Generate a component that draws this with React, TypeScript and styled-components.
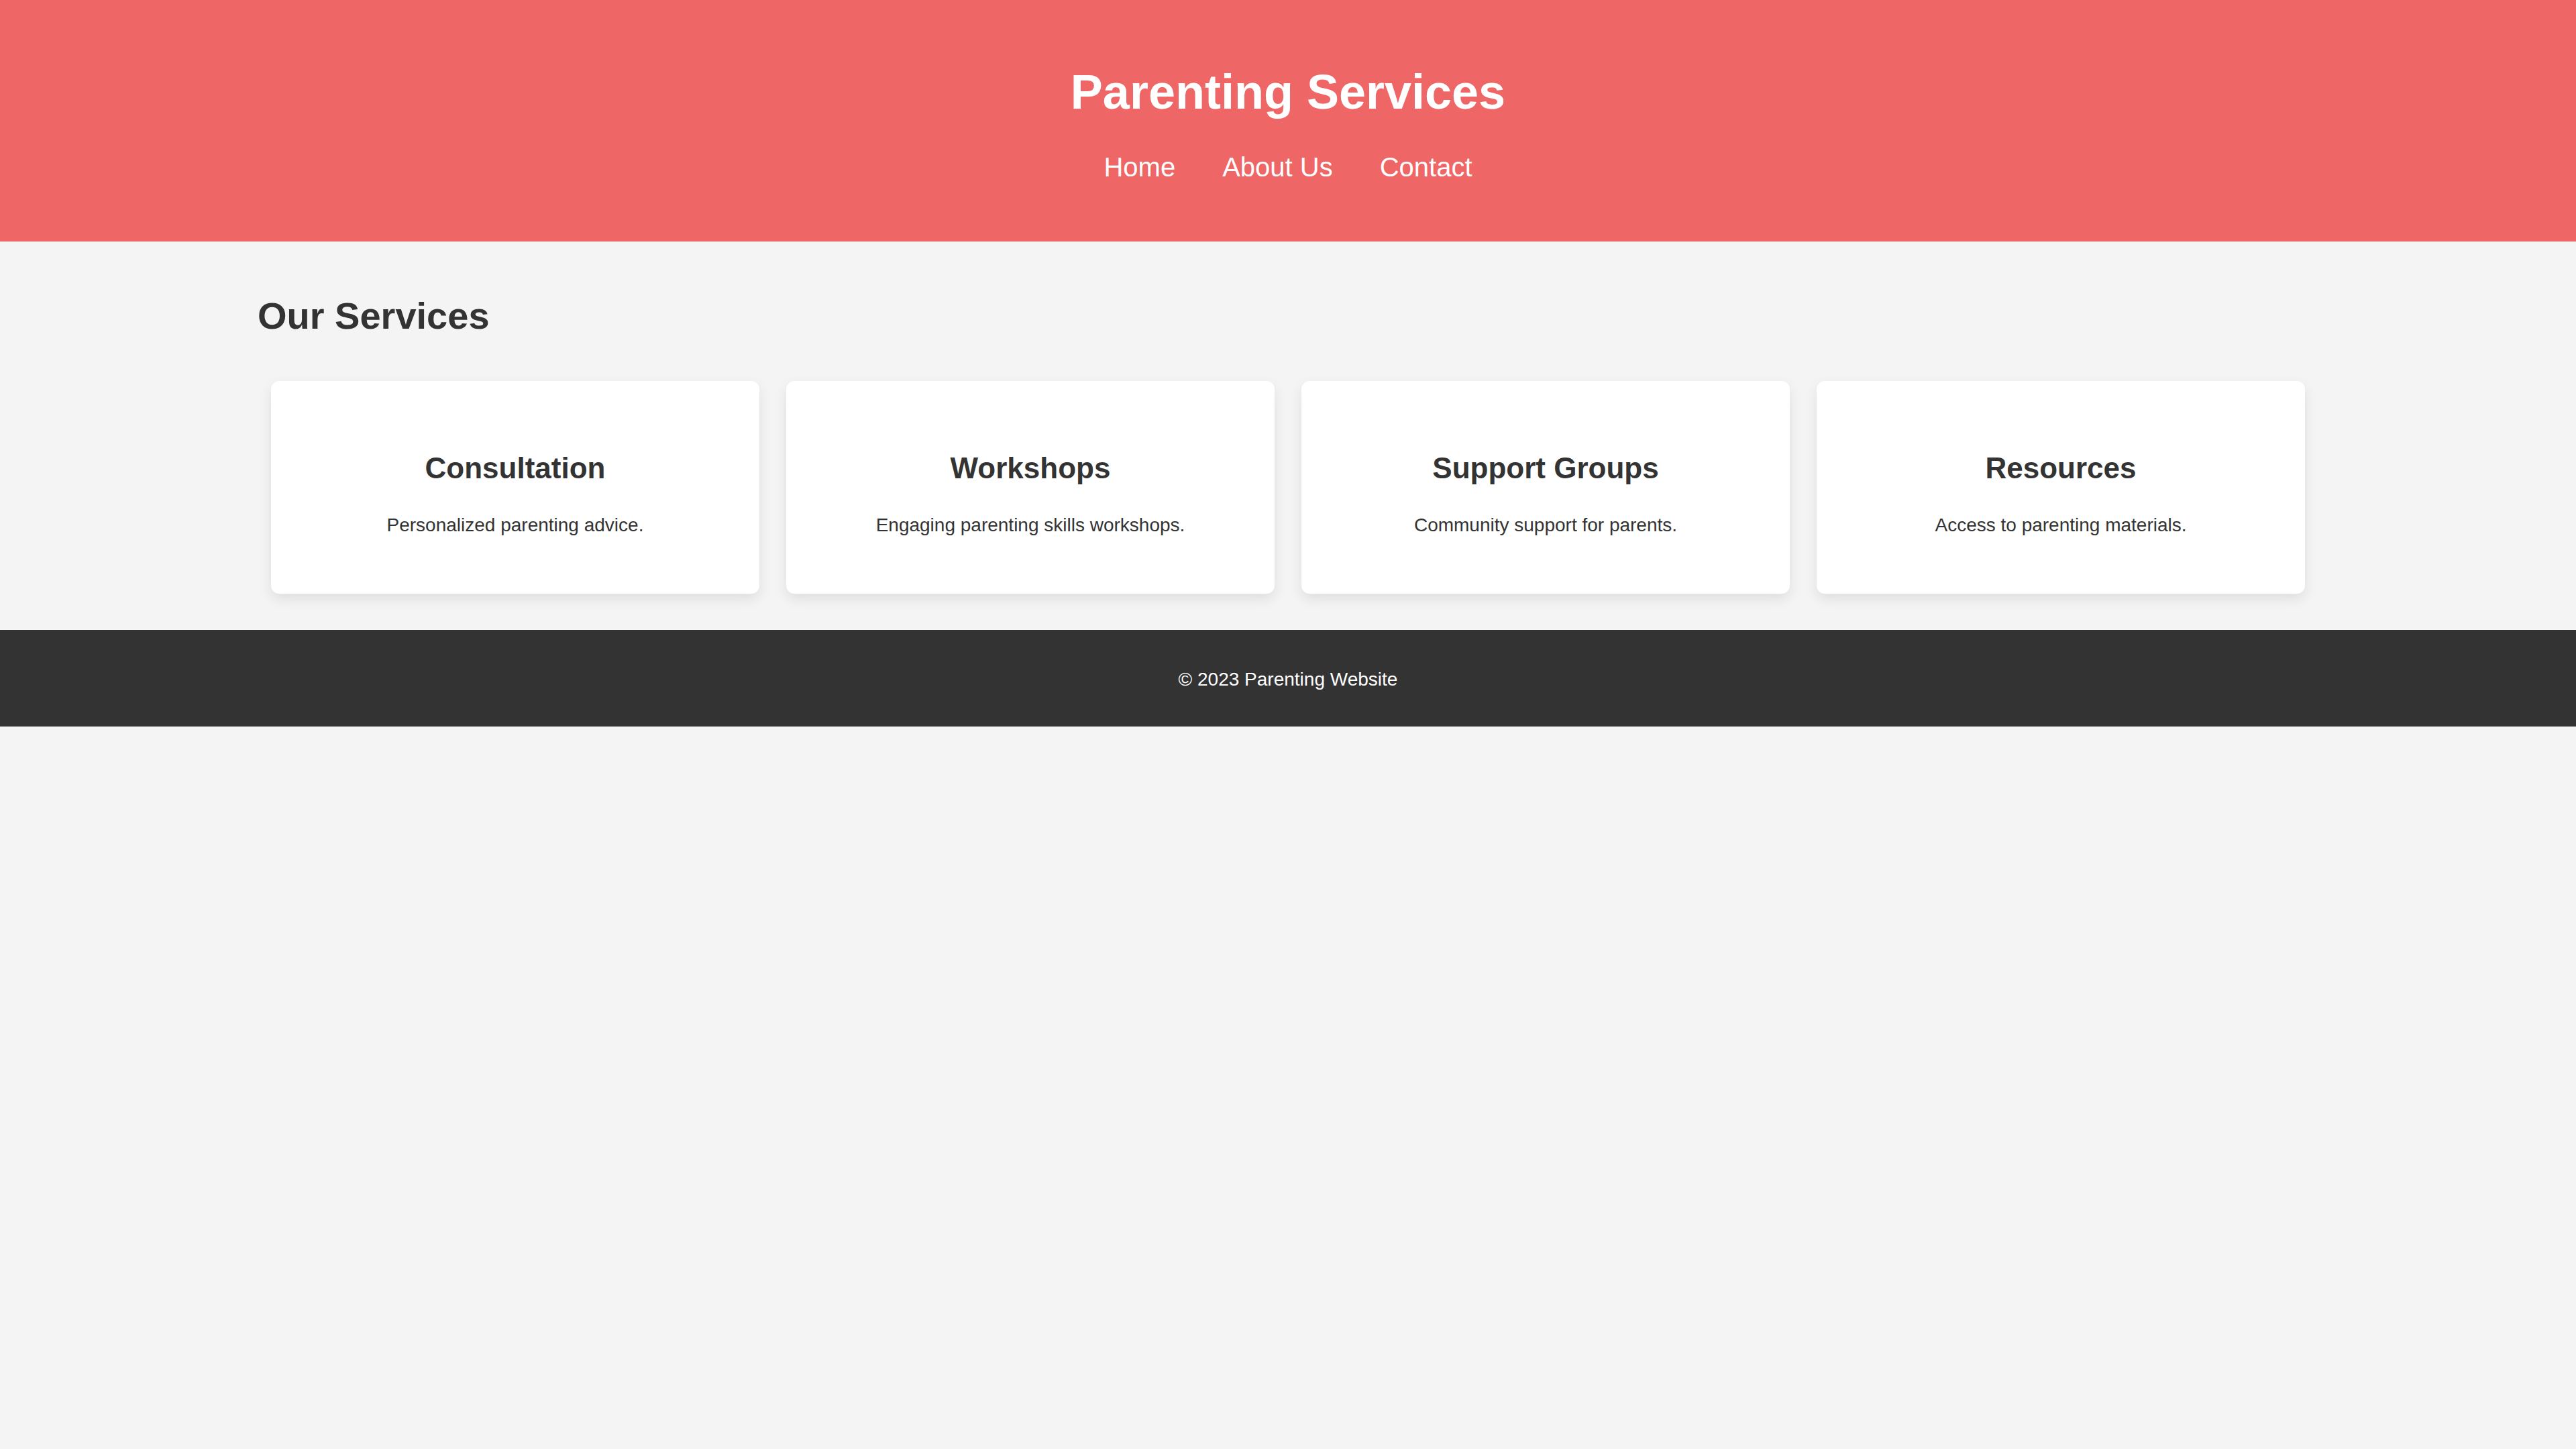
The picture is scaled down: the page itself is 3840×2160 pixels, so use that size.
import React from 'react';
import styled, { createGlobalStyle } from 'styled-components';

const GlobalStyle = createGlobalStyle`
  html, body {
    margin: 0;
    padding: 0;
    background: #f4f4f4;
    font-family: "Liberation Sans", Arial, Helvetica, sans-serif;
    color: #333;
  }
`;

const StyledHeader = styled.header`
  background: #ee6666;
  color: #fff;
  text-align: center;
  padding: 96px 0 88px;
`;

const StyledTitle = styled.h1`
  font-size: 72px;
  font-weight: 700;
  margin: 0 0 49px;
`;

const StyledNav = styled.nav`
  display: flex;
  justify-content: center;
  gap: 70px;
`;

const StyledNavLink = styled.a`
  color: #fff;
  font-size: 40px;
  text-decoration: none;
`;

const StyledMain = styled.main`
  width: 80%;
  margin: 0 auto;
  padding: 78px 0 34px;
`;

const StyledHeading = styled.h2`
  font-size: 56px;
  font-weight: 700;
  margin: 0 0 45px;
`;

const StyledCards = styled.div`
  display: flex;
`;

const StyledCard = styled.div`
  flex: 1;
  margin: 20px;
  background: #fff;
  border-radius: 12px;
  box-shadow: 0 8px 20px rgba(0, 0, 0, 0.09);
  text-align: center;
  padding: 105px 40px 86px;
`;

const StyledCardTitle = styled.h3`
  font-size: 44px;
  font-weight: 700;
  margin: 0 0 44px;
`;

const StyledCardText = styled.p`
  font-size: 28px;
  margin: 0;
`;

const StyledFooter = styled.footer`
  background: #333;
  color: #fff;
  text-align: center;
  font-size: 28px;
  padding: 58px 0 54px;
`;

const services = [
  { title: 'Consultation', text: 'Personalized parenting advice.' },
  { title: 'Workshops', text: 'Engaging parenting skills workshops.' },
  { title: 'Support Groups', text: 'Community support for parents.' },
  { title: 'Resources', text: 'Access to parenting materials.' },
];

const App: React.FC = () => (
  <>
    <GlobalStyle />
    <StyledHeader>
      <StyledTitle>Parenting Services</StyledTitle>
      <StyledNav>
        <StyledNavLink href="#">Home</StyledNavLink>
        <StyledNavLink href="#">About Us</StyledNavLink>
        <StyledNavLink href="#">Contact</StyledNavLink>
      </StyledNav>
    </StyledHeader>
    <StyledMain>
      <StyledHeading>Our Services</StyledHeading>
      <StyledCards>
        {services.map((s) => (
          <StyledCard key={s.title}>
            <StyledCardTitle>{s.title}</StyledCardTitle>
            <StyledCardText>{s.text}</StyledCardText>
          </StyledCard>
        ))}
      </StyledCards>
    </StyledMain>
    <StyledFooter>&copy; 2023 Parenting Website</StyledFooter>
  </>
);

export default App;
